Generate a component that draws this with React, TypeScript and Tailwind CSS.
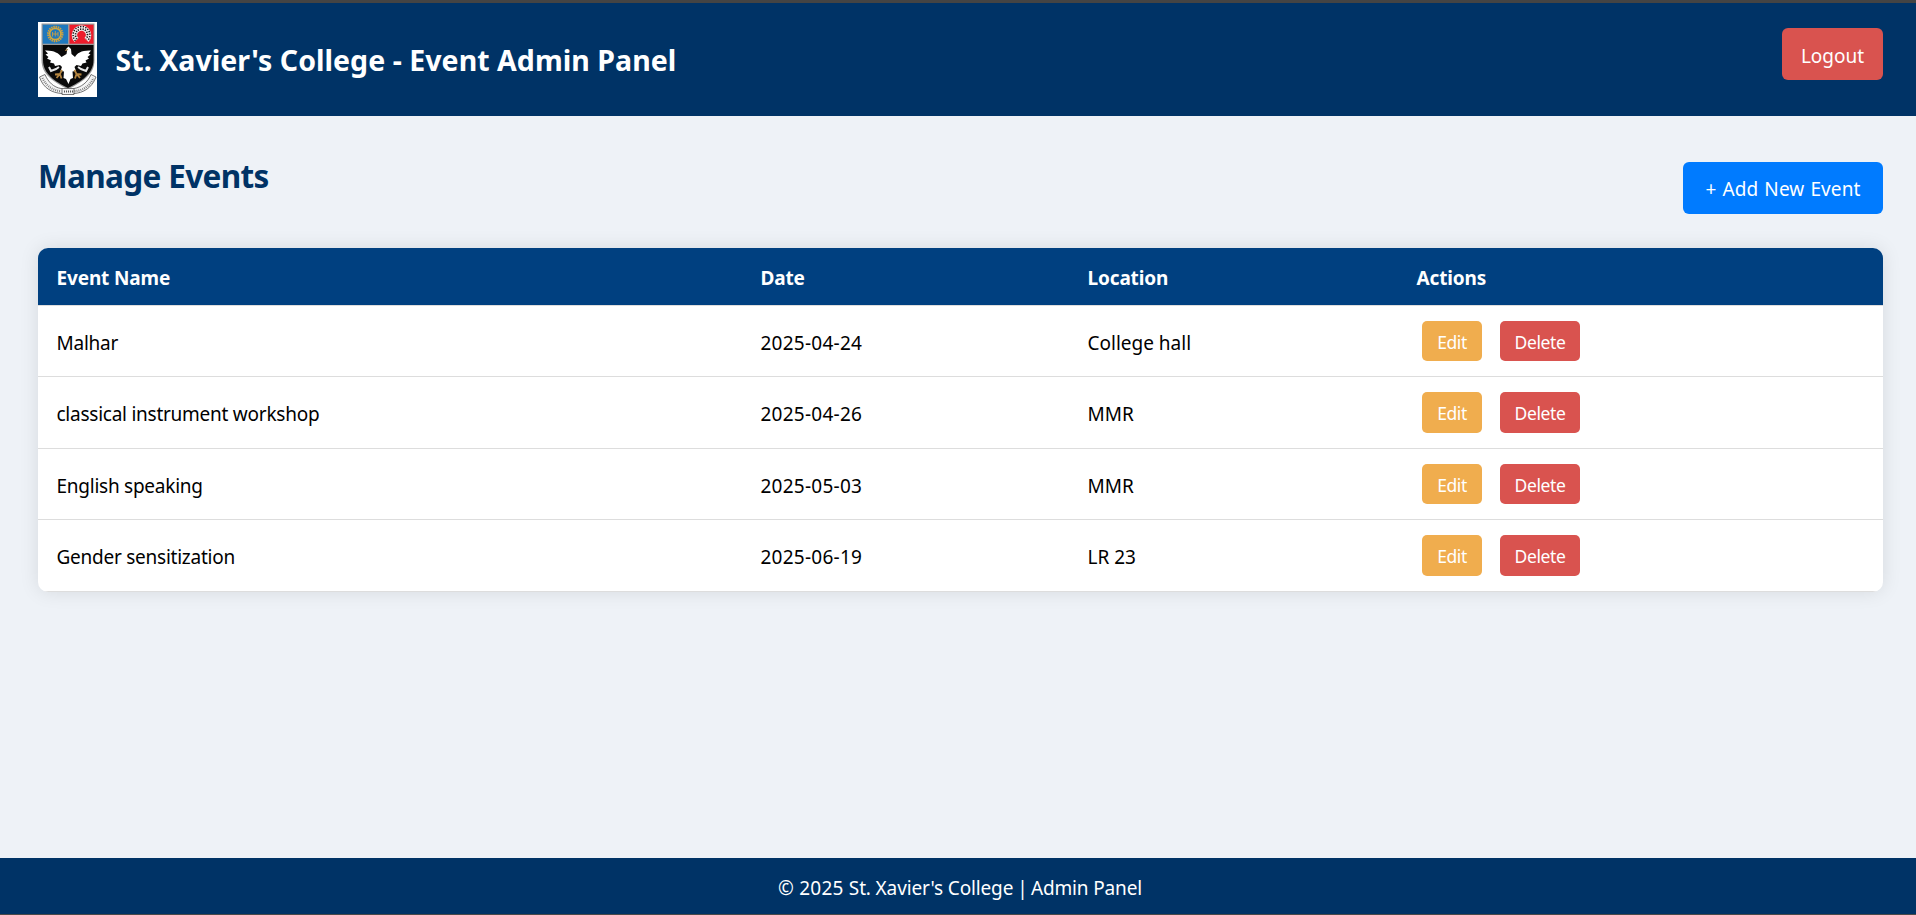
import React from "react";

const events = [
  { name: "Malhar", date: "2025-04-24", location: "College hall" },
  { name: "classical instrument workshop", date: "2025-04-26", location: "MMR" },
  { name: "English speaking", date: "2025-05-03", location: "MMR" },
  { name: "Gender sensitization", date: "2025-06-19", location: "LR 23" },
];

function Crest() {
  return (
    <svg className="block h-[75px] w-[59px] shrink-0" viewBox="0 0 59 75">
      <rect width="59" height="75" fill="#fff" />
      {/* shield */}
      <path d="M3.500 1.500H56.500V38C56.500 53 44 60 30 67.500C16 60 3.500 53 3.500 38Z" fill="#9a9a9a" />
      <path d="M5 23H55.500V38C55.500 52 43 59.500 30 66C17 59.500 5 52 5 38Z" fill="#0a0a0a" />
      <rect x="4.700" y="2.700" width="25.300" height="19" fill="#1f78bd" />
      <rect x="31.500" y="2.700" width="24" height="19" fill="#ed1c2b" />
      {/* sun */}
      <circle cx="17.300" cy="12" r="7" fill="none" stroke="#c9a043" strokeWidth="2.400" strokeDasharray="1.500 0.700" />
      <circle cx="17.300" cy="12" r="5.600" fill="none" stroke="#d3a83f" strokeWidth="1.500" />
      <path d="M14.500 10V14.500M17.300 9V14.500M20 10V14.500M14.500 12H20" fill="none" stroke="#b99a50" strokeWidth="1" />
      {/* chequered crescent */}
      <path d="M38.500 18A7 7 0 1 1 48.500 18" fill="none" stroke="#f4ecec" strokeWidth="5.600" />
      <path d="M37.500 18.800A8.400 8.400 0 1 1 49.500 18.800" fill="none" stroke="#1a1013" strokeWidth="1.500" strokeDasharray="1.300 1.300" />
      <path d="M39 17A6 6 0 1 1 48 17" fill="none" stroke="#1a1013" strokeWidth="1.700" strokeDasharray="1.200 1.200" />
      {/* eagle */}
      <path
        d="M28 27L30.500 24.500L33 27L33.500 32L37 35C39 31 44 28 53 28.500L50.500 31.500L52.500 32.500L49.500 35L51 36.500L47.500 38.500L48.500 40.500L44.500 41.500L43 44L38.500 43L36.500 45L38 49L34.500 49.500L35 56L32.500 57L30.500 62L28 57L25.500 56L26 49.500L22.500 49L24 45L22 43L17 44L16 41.500L12 40.500L13 38.500L9 36.500L10.500 35L7.500 32.500L10 31.500L7 28.500C15 28 21 31 23.500 35L28.500 32L29 29Z"
        fill="#fff"
      />
      <path d="M11 45L13 49L18 47L21 45M50 45L48 49L43 47L40 45" fill="none" stroke="#e6e6e6" strokeWidth="2" />
      <path d="M27 28.500L30 27.500" stroke="#a97c3c" strokeWidth="1.200" />
      <path d="M24 48L22 52L17 52.500M22 52L18.500 56M22 52L23.500 56.500M36.500 48L38.500 52L43.500 52.500M38.500 52L42 56M38.500 52L37 56.500" fill="none" stroke="#b5853f" strokeWidth="1.800" />
      {/* motto ribbon */}
      <path d="M1.500 55L7 52.500C10 60 16 65.500 23 66.500H36C43 65.500 50 60 53 52.500L58 55C54 66 45 71 36 71.500V72.500H24V71.500C14 71 5 66 1.500 55Z" fill="#f4f4f4" stroke="#555" strokeWidth="0.800" />
      <path d="M4.500 56C8 64 15 68.500 23 69.200M36.500 69.200C45 68.500 52 64 55.500 56" fill="none" stroke="#777" strokeWidth="2.200" strokeDasharray="0.900 1.100" />
      <path d="M26 69.500H35" stroke="#555" strokeWidth="2.200" strokeDasharray="1 1" />
      <path d="M24 66.500V72M36 66.500V72" stroke="#555" strokeWidth="0.800" />
    </svg>
  );
}

export default function App() {
  return (
    <div className="flex h-[915px] w-full flex-col overflow-hidden bg-[#eef2f7] font-['Noto_Sans','Open_Sans',sans-serif] text-[19px] leading-[27px] text-black">
      <div className="h-[3px] shrink-0 bg-[#444444]" />
      <header className="flex h-[113px] shrink-0 items-start justify-between bg-[#003366] pr-[33px] pl-[38px] pt-[19px] text-white">
        <div className="flex items-center">
          <Crest />
          <h1 className="ml-[18.5px] whitespace-nowrap text-[28.5px] leading-[40px] font-bold tracking-[0.04px]">St. Xavier's College - Event Admin Panel</h1>
        </div>
        <button className="mt-[6px] h-[52px] w-[101px] rounded-[6px] bg-[#d9534f] pt-[4px]">Logout</button>
      </header>
      <main className="flex flex-1 flex-col pr-[33px] pl-[38px]">
        <div className="flex h-[132px] items-start justify-between">
          <h2 className="pt-[39px] text-[31.5px] leading-[42px] font-bold tracking-[-0.65px] text-[#003366]">Manage Events</h2>
          <button className="mt-[46px] h-[52px] w-[200px] rounded-[6px] bg-[#007bff] pt-[2px] tracking-[0.1px] [word-spacing:1px] text-white">+ Add New Event</button>
        </div>
        <div className="overflow-hidden rounded-[10px] bg-white shadow-[0_0_19px_rgba(0,0,0,0.1)]">
          <div className="grid h-[58px] grid-cols-[704px_327px_329px_1fr] items-center border-b border-[#dddddd] bg-[#004080] pl-[18.5px] pt-[4px] font-bold tracking-[-0.14px] text-white">
            <span>Event Name</span>
            <span>Date</span>
            <span>Location</span>
            <span>Actions</span>
          </div>
          {events.map((e) => (
            <div key={e.name} className="grid h-[71.45px] grid-cols-[704px_327px_329px_1fr] items-center border-b border-[#dddddd] pl-[18.5px]">
              <span className="pt-[4px] tracking-[-0.25px]">{e.name}</span>
              <span className="pt-[4px] tracking-[0.25px]">{e.date}</span>
              <span className="pt-[4px]">{e.location}</span>
              <span className="flex gap-[18px] pl-[5.5px] text-[17.5px] tracking-[-0.4px] text-white">
                <button className="h-[40.4px] w-[60px] rounded-[5px] bg-[#f0ad4e] pt-[2px]">Edit</button>
                <button className="h-[40.4px] w-[80px] rounded-[5px] bg-[#d9534f] pt-[2px]">Delete</button>
              </span>
            </div>
          ))}
        </div>
      </main>
      <footer className="flex h-[57px] shrink-0 items-center justify-center border-b border-[#4a4a4a] bg-[#003366] pt-[4px] pl-[4px] tracking-[-0.14px] text-white">
        <p>
          <span className="tracking-[0.25px]">© 2025 </span>
          St. Xavier's College
          <span className="tracking-[-0.9px]"> | </span>
          Admin Panel
        </p>
      </footer>
    </div>
  );
}
